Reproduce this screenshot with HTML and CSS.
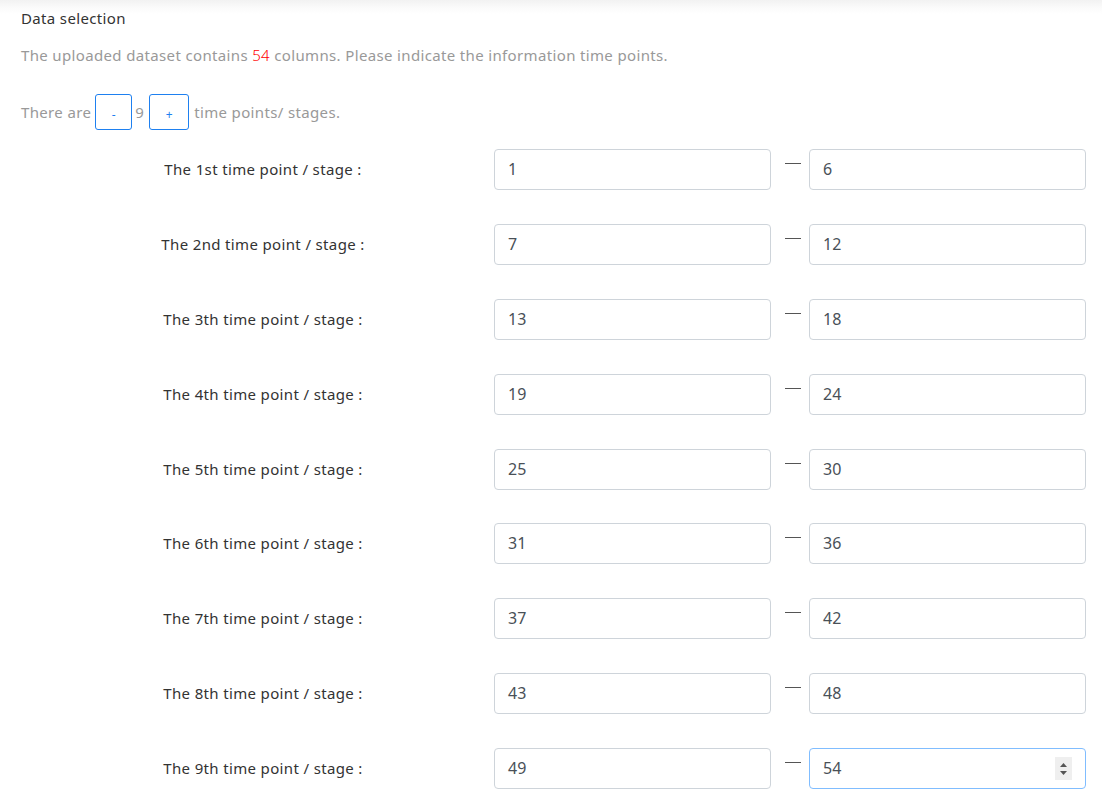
FILE: index.html
```html
<!DOCTYPE html>
<html>
<head>
<meta charset="utf-8">
<link rel="stylesheet" href="styles.css">
</head>
<body>
<div class="page">
  <div class="title">Data selection</div>
  <p class="info">The uploaded dataset contains <span class="red">54</span> columns. Please indicate the information time points.</p>
  <div class="counter">
    <span>There are</span>
    <button class="step">-</button>
    <span class="num">9</span>
    <button class="step plus">+</button>
    <span>time points/ stages.</span>
  </div>
  <div class="rows">
    <div class="row"><div class="label">The 1st time point / stage :</div><div class="field">1</div><div class="dash"></div><div class="field">6</div></div>
    <div class="row"><div class="label">The 2nd time point / stage :</div><div class="field">7</div><div class="dash"></div><div class="field">12</div></div>
    <div class="row"><div class="label">The 3th time point / stage :</div><div class="field">13</div><div class="dash"></div><div class="field">18</div></div>
    <div class="row"><div class="label">The 4th time point / stage :</div><div class="field">19</div><div class="dash"></div><div class="field">24</div></div>
    <div class="row"><div class="label">The 5th time point / stage :</div><div class="field">25</div><div class="dash"></div><div class="field">30</div></div>
    <div class="row"><div class="label">The 6th time point / stage :</div><div class="field">31</div><div class="dash"></div><div class="field">36</div></div>
    <div class="row"><div class="label">The 7th time point / stage :</div><div class="field">37</div><div class="dash"></div><div class="field">42</div></div>
    <div class="row"><div class="label">The 8th time point / stage :</div><div class="field">43</div><div class="dash"></div><div class="field">48</div></div>
    <div class="row"><div class="label">The 9th time point / stage :</div><div class="field">49</div><div class="dash"></div><div class="field focus">54<span class="spin"><svg width="9" height="16" viewBox="0 0 9 16"><path d="M4.5 2 L8 6 L1 6 Z" fill="#555"/><path d="M1 10 L8 10 L4.5 14 Z" fill="#555"/></svg></span></div></div>
  </div>
</div>
</body>
</html>
```

FILE: styles.css
```css
html, body {
  margin: 0;
  padding: 0;
  background: #fff;
}
body {
  font-family: "Noto Sans", "Open Sans", sans-serif;
  color: #333;
}
.page {
  width: 1102px;
  height: 806px;
  box-sizing: border-box;
  padding: 8px 0 0 21px;
  background: linear-gradient(to bottom, #f2f2f2 0px, #fbfbfb 8px, #fff 14px);
  overflow: hidden;
}
.title, .info, .counter, .label {
  font-size: 15px;
  letter-spacing: 0.35px;
}
.title {
  line-height: 20px;
  color: #333;
}
.info {
  margin: 17px 0 0 0;
  line-height: 20px;
  color: #999;
}
.red {
  color: #f00;
  font-weight: 300;
}
.counter {
  margin-top: 29px;
  display: flex;
  align-items: center;
  color: #999;
  height: 36px;
}
.step {
  width: 37px;
  height: 36px;
  box-sizing: border-box;
  margin: 0 0 0 4px;
  padding: 6px 0 0 0;
  border: 1px solid #1e80f0;
  border-radius: 3px;
  background: #fff;
  color: #1e80f0;
  font-family: inherit;
  font-size: 12px;
  line-height: 20px;
  text-align: center;
}
.plus {
  width: 40px;
  margin-right: 5px;
  margin-left: 5px;
}
.num {
  margin-left: 3px;
}
.rows {
  margin-top: 19px;
  padding-left: 109px;
  display: flex;
  flex-direction: column;
  gap: 33.9px;
}
.row {
  display: flex;
  align-items: stretch;
  height: 41px;
}
.label {
  width: 266px;
  margin-right: 98px;
  text-align: center;
  color: #333;
  line-height: 41px;
}
.field {
  position: relative;
  width: 277px;
  height: 41px;
  box-sizing: border-box;
  border: 1px solid #ced4da;
  border-radius: 4px;
  padding: 0 13px;
  font-size: 16px;
  line-height: 39px;
  color: #495057;
}
.field.focus {
  border-color: #80bdff;
}
.dash {
  width: 38px;
  position: relative;
}
.dash::before {
  content: "";
  position: absolute;
  left: 14px;
  top: 14px;
  width: 16px;
  height: 1px;
  background: #555;
}
.spin {
  position: absolute;
  right: 13px;
  top: 8px;
  width: 17px;
  height: 23px;
  background: #efefef;
  display: flex;
  align-items: center;
  justify-content: center;
}
```
